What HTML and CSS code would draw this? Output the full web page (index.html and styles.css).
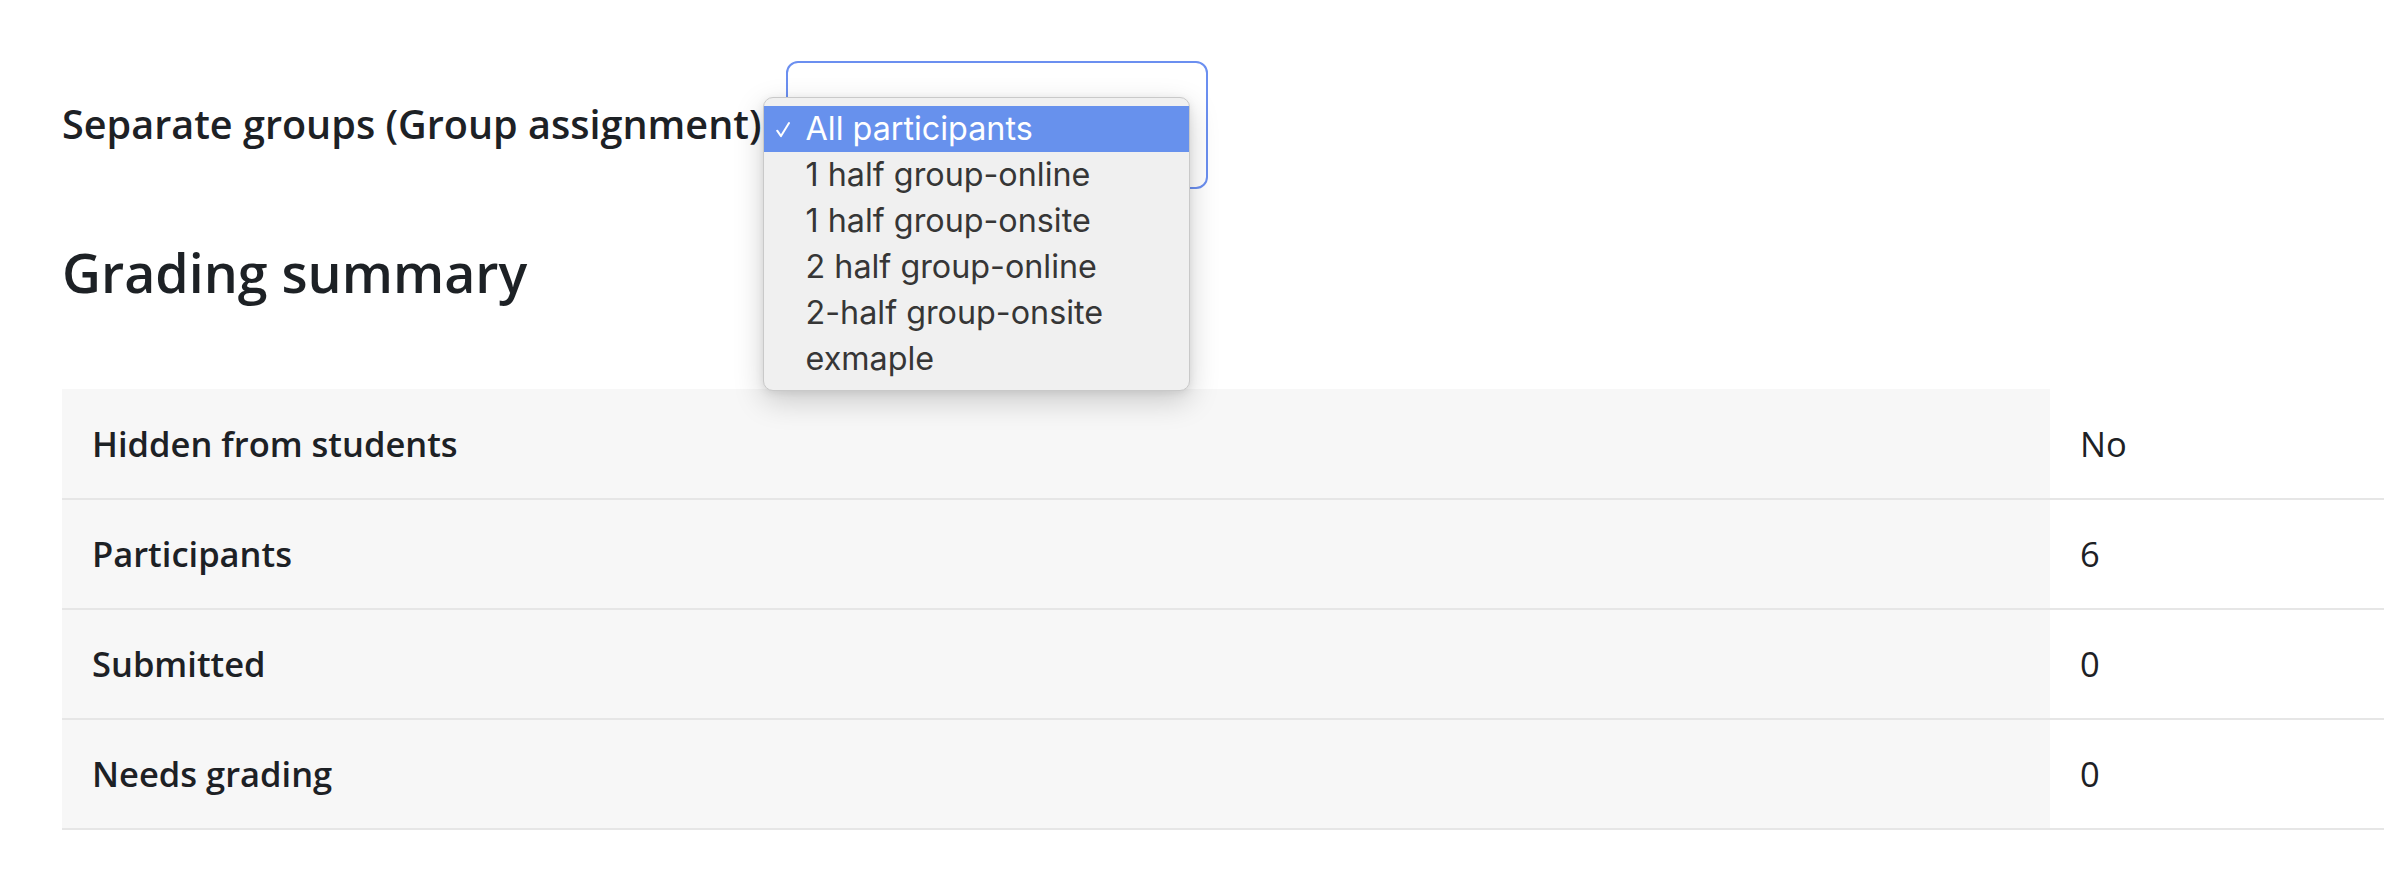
FILE: index.html
```html
<!DOCTYPE html>
<html lang="en">
<head>
<meta charset="utf-8">
<title>Grading summary</title>
<link rel="stylesheet" href="styles.css">
</head>
<body>
<main class="page">
  <div class="group-row">
    <label class="group-label" for="group">Separate groups (Group assignment)</label>
    <div class="select-wrap">
      <div class="select-box" id="group"></div>
      <ul class="popup">
        <li class="opt selected"><svg class="check" viewBox="0 0 14 16" width="14" height="17"><path d="M1.2 9.2 L5 14.6 L13 1.6" fill="none" stroke="#fff" stroke-width="2" stroke-linecap="round" stroke-linejoin="round"/></svg>All participants</li>
        <li class="opt">1 half group-online</li>
        <li class="opt">1 half group-onsite</li>
        <li class="opt">2 half group-online</li>
        <li class="opt">2-half group-onsite</li>
        <li class="opt">exmaple</li>
      </ul>
    </div>
  </div>

  <h2 class="heading">Grading summary</h2>

  <table class="summary">
    <tbody>
      <tr><th>Hidden from students</th><td>No</td></tr>
      <tr><th>Participants</th><td>6</td></tr>
      <tr><th>Submitted</th><td>0</td></tr>
      <tr><th>Needs grading</th><td>0</td></tr>
    </tbody>
  </table>
</main>
</body>
</html>
```

FILE: styles.css
```css
html, body {
  margin: 0;
  padding: 0;
  background: #ffffff;
}

body {
  font-family: "Open Sans", "Noto Sans", sans-serif;
  color: #1d2125;
  width: 2384px;
  overflow: hidden;
}

.page {
  padding-left: 62px;
}

.group-row {
  display: flex;
  align-items: center;
  gap: 24px;
  padding-top: 61px;
}

.group-label {
  font-size: 39.6px;
  font-weight: 600;
  line-height: 1.2;
  color: #1d2125;
}

.select-wrap {
  position: relative;
}

.select-box {
  width: 418px;
  height: 124px;
  border: 2px solid #6b8ff0;
  border-radius: 12px;
  background: #ffffff;
}

.popup {
  position: absolute;
  left: -23px;
  top: 36px;
  width: 425px;
  margin: 0;
  padding: 8px 0;
  list-style: none;
  background: #f0f0f0;
  border: 1px solid #c9c9c9;
  border-radius: 10px;
  box-shadow: 0 10px 30px rgba(0, 0, 0, 0.18), 0 2px 8px rgba(0, 0, 0, 0.08);
  font-family: "Inter", "Liberation Sans", sans-serif;
  font-size: 32.3px;
  color: #363636;
  z-index: 5;
}

.opt {
  position: relative;
  height: 46px;
  line-height: 46px;
  padding-left: 42px;
  white-space: nowrap;
}

.opt.selected {
  background: #6791ed;
  color: #ffffff;
}

.check {
  position: absolute;
  left: 12px;
  top: 15px;
}

.heading {
  font-size: 53.7px;
  font-weight: 600;
  line-height: 1.2;
  margin: 52px 0 0 0;
  color: #1d2125;
}

.summary {
  margin-top: 84px;
  width: 2322px;
  border-collapse: collapse;
  font-size: 34.5px;
  line-height: 1.45;
}

.summary tr {
  height: 110px;
  border-bottom: 2px solid #e6e6e6;
}

.summary th,
.summary td {
  padding: 0 30px;
  text-align: left;
  vertical-align: middle;
}

.summary th {
  width: 1928px;
  background: #f7f7f7;
  font-weight: 600;
}

.summary td {
  background: #ffffff;
  font-weight: 400;
}
```
